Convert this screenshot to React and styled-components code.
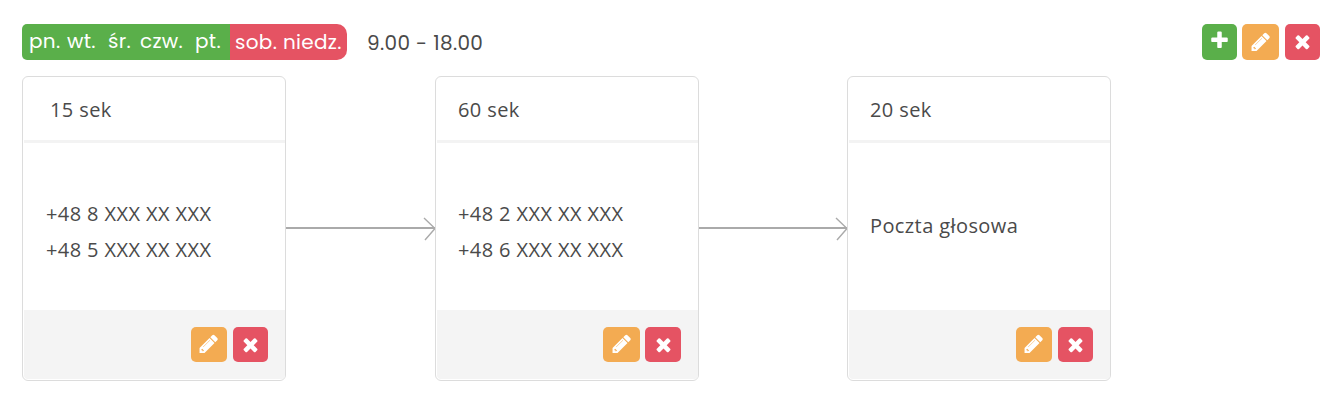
import React from 'react'
import styled, { createGlobalStyle } from 'styled-components'

const icons = {
    plus: 'M1600 736v192q0 40-28 68t-68 28h-416v416q0 40-28 68t-68 28h-192q-40 0-68-28t-28-68v-416h-416q-40 0-68-28t-28-68v-192q0-40 28-68t68-28h416v-416q0-40 28-68t68-28h192q40 0 68 28t28 68v416h416q40 0 68 28t28 68z',
    pencil: 'M430 1530l70-70-150-150-70 70v60h90v90h60zm574-922q0-16-16-16-8 0-13 5l-550 550q-5 5-5 13 0 16 16 16 8 0 13-5l550-550q5-5 5-13zm-44-192l416 416-832 832h-416v-416zm683 96q0 53-37 90l-166 166-416-416 166-165q36-38 90-38 53 0 91 38l235 234q37 39 37 91z',
    times: 'M1490 1322q0 40-28 68l-136 136q-28 28-68 28t-68-28l-294-294-294 294q-28 28-68 28t-68-28l-136-136q-28-28-28-68t28-68l294-294-294-294q-28-28-28-68t28-68l136-136q28-28 68-28t68 28l294 294 294-294q28-28 68-28t68 28l136 136q28 28 28 68t-28 68l-294 294 294 294q28 28 28 68z'
}

const steps = [
    { time: '15 sek', lines: ['+48 8 XXX XX XXX', '+48 5 XXX XX XXX'], headPad: 28, bodyPad: 24, drop: 11, editWidth: 36, removeWidth: 35, gap: 6, arrow: 149 },
    { time: '60 sek', lines: ['+48 2 XXX XX XXX', '+48 6 XXX XX XXX'], headPad: 23, bodyPad: 23, drop: 11, editWidth: 37, removeWidth: 36, gap: 5, arrow: 148 },
    { time: '20 sek', lines: ['Poczta głosowa'], headPad: 23, bodyPad: 23, drop: -1, editWidth: 36, removeWidth: 35, gap: 6 }
]

const workDays = [
    { name: 'pn.', width: 38 },
    { name: 'wt.', width: 41 },
    { name: 'śr.', width: 32 },
    { name: 'czw.', width: 55 },
    { name: 'pt.', width: 28 }
]

const freeDays = [
    { name: 'sob.', width: 48 },
    { name: 'niedz.', width: 60 }
]

const Icon = ({ name, size = 21 }) => (
    <svg width={size} height={size} viewBox='0 0 1792 1792' fill='#fff'>
        <path d={icons[name]} />
    </svg>
)

const Arrow = ({ width }) => (
    <ArrowStyled width={width + 2} height='26' viewBox={`0 0 ${width + 2} 26`} fill='none' stroke='#aaa'>
        <path d={`M0 13H${width}`} strokeWidth='2' />
        <path d={`M${width - 11} 3L${width} 13.5L${width - 10} 25`} strokeWidth='1.4' />
    </ArrowStyled>
)

const App = () => {
    return (
        <>
            <GlobalStyle />
            <Schedule>
                <Toolbar>
                    <DayGroup $bg='#5aaf4a' $radius='5px 0 0 5px' $pad='7px'>
                        {workDays.map(day => <Day key={day.name} $width={day.width}>{day.name}</Day>)}
                    </DayGroup>
                    <DayGroup $bg='#e55363' $radius='0 10px 10px 0' $pad='5px'>
                        {freeDays.map(day => <Day key={day.name} $width={day.width}>{day.name}</Day>)}
                    </DayGroup>
                    <Hours>9.00 - 18.00</Hours>
                    <Actions>
                        <IconButton $bg='#5aaf4a' $width={35} $lift='3px'><Icon name='plus' /></IconButton>
                        <IconButton $bg='#f3ab52' $width={37}><Icon name='pencil' size={21.5} /></IconButton>
                        <IconButton $bg='#e55363' $width={35} $lift='2px'><Icon name='times' /></IconButton>
                    </Actions>
                </Toolbar>
                <Flow>
                    {steps.map(step => (
                        <React.Fragment key={step.time}>
                            <Card>
                                <CardHead $pad={step.headPad}>{step.time}</CardHead>
                                <CardBody $pad={step.bodyPad} $drop={step.drop}>
                                    {step.lines.map(line => <p key={line}>{line}</p>)}
                                </CardBody>
                                <CardFooter $gap={step.gap}>
                                    <IconButton $bg='#f3ab52' $width={step.editWidth}><Icon name='pencil' size={21.5} /></IconButton>
                                    <IconButton $bg='#e55363' $width={step.removeWidth}><Icon name='times' /></IconButton>
                                </CardFooter>
                            </Card>
                            {step.arrow && <Arrow width={step.arrow} />}
                        </React.Fragment>
                    ))}
                </Flow>
            </Schedule>
        </>
    )
}

const GlobalStyle = createGlobalStyle`
    *{
        box-sizing: border-box;
        margin: 0;
        padding: 0;
    }
    body{
        background: #fff;
        color: #4a4a4a;
        font-family: 'Open Sans', sans-serif;
    }
`

const Schedule = styled.div`
    padding: 24px 20px 0 22px;
`

const Toolbar = styled.div`
    display: flex;
    height: 36px;
    font-family: Poppins, Inter, sans-serif;
    font-size: 20px;
    line-height: 36px;
    letter-spacing: .3px;
`

const DayGroup = styled.div`
    display: flex;
    padding-left: ${props => props.$pad};
    background: ${props => props.$bg};
    border-radius: ${props => props.$radius};
    color: #fff;
    &:first-child{
        width: 208px;
        line-height: 35px;
    }
    &:nth-child(2){
        width: 117px;
    }
`

const Day = styled.span`
    flex: none;
    width: ${props => props.$width}px;
    white-space: nowrap;
`

const Hours = styled.span`
    margin-left: 20px;
    padding-top: 1px;
    letter-spacing: .36px;
    white-space: nowrap;
`

const Actions = styled.div`
    display: flex;
    gap: 5px;
    margin-left: auto;
    button:last-child{
        margin-left: 1px;
    }
`

const IconButton = styled.button`
    display: flex;
    align-items: center;
    justify-content: center;
    width: ${props => props.$width}px;
    height: 36px;
    padding-bottom: ${props => props.$lift || '1px'};
    border: none;
    border-radius: 5px;
    background: ${props => props.$bg};
`

const Flow = styled.div`
    display: flex;
    margin-top: 16px;
`

const Card = styled.div`
    display: flex;
    flex-direction: column;
    flex: none;
    width: 264px;
    height: 305px;
    padding: 0 0 1px 1px;
    border: 1px solid #dcdcdc;
    border-radius: 6px;
    font-size: 20px;
    letter-spacing: .4px;
`

const CardHead = styled.div`
    height: 66px;
    padding-left: ${props => props.$pad - 2}px;
    border-bottom: 3px solid #f3f3f3;
    line-height: 66px;
`

const CardBody = styled.div`
    display: flex;
    flex: 1;
    flex-direction: column;
    justify-content: center;
    padding-top: ${props => Math.max(props.$drop, 0)}px;
    padding-bottom: ${props => Math.max(-props.$drop, 0)}px;
    padding-left: ${props => props.$pad - 2}px;
    line-height: 36px;
`

const CardFooter = styled.div`
    display: flex;
    justify-content: flex-end;
    gap: ${props => props.$gap}px;
    height: 69px;
    padding: 17px 17px 0 0;
    border-radius: 0 0 4px 4px;
    background: #f4f4f4;
    ${IconButton}{
        height: 35px;
    }
`

const ArrowStyled = styled.svg`
    flex: none;
    margin: 139px -2px 0 0;
`

export default App
